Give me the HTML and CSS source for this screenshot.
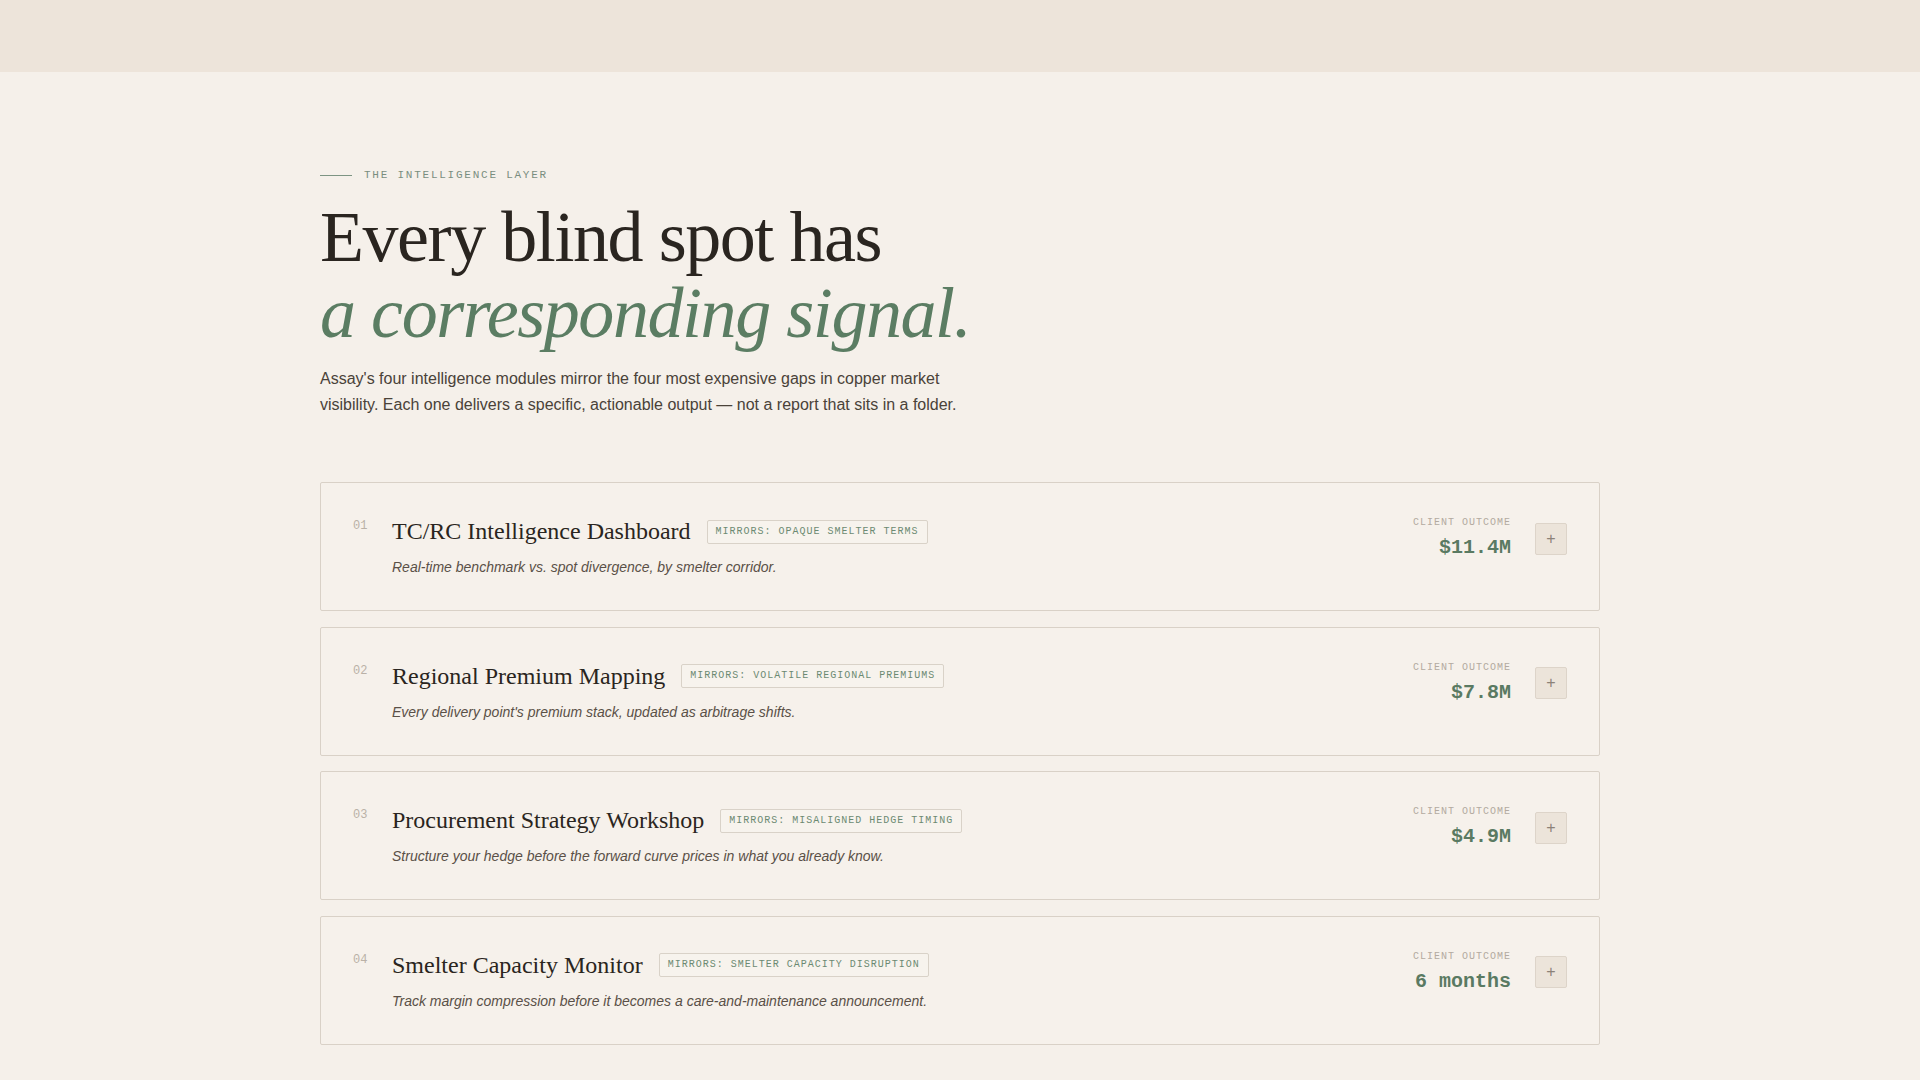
FILE: index.html
```html
<!DOCTYPE html>
<html lang="en">
<head>
    <meta charset="UTF-8">
    <meta name="viewport" content="width=device-width, initial-scale=1.0">
    <title>Assay — The Intelligence Layer</title>
    <link rel="stylesheet" href="styles.css">
</head>
<body>
    <header class="top-bar"></header>

    <section class="intel">
        <div class="eyebrow">
            <span class="eyebrow-line"></span>
            <span class="eyebrow-text">The Intelligence Layer</span>
        </div>
        <h1 class="intel-title">
            Every blind spot has<br>
            <em>a corresponding signal.</em>
        </h1>
        <p class="intel-lead">
            Assay's four intelligence modules mirror the four most expensive gaps in copper market
            visibility. Each one delivers a specific, actionable output — not a report that sits in a folder.
        </p>

        <div class="module-list">
            <div class="module">
                <div class="module-num">01</div>
                <div class="module-main">
                    <div class="module-head">
                        <h3 class="module-name">TC/RC Intelligence Dashboard</h3>
                        <span class="module-tag">Mirrors: Opaque smelter terms</span>
                    </div>
                    <p class="module-desc">Real-time benchmark vs. spot divergence, by smelter corridor.</p>
                </div>
                <div class="module-side">
                    <div class="outcome">
                        <div class="outcome-label">Client outcome</div>
                        <div class="outcome-value">$11.4M</div>
                    </div>
                    <button class="expand-btn">+</button>
                </div>
            </div>

            <div class="module">
                <div class="module-num">02</div>
                <div class="module-main">
                    <div class="module-head">
                        <h3 class="module-name">Regional Premium Mapping</h3>
                        <span class="module-tag">Mirrors: Volatile regional premiums</span>
                    </div>
                    <p class="module-desc">Every delivery point's premium stack, updated as arbitrage shifts.</p>
                </div>
                <div class="module-side">
                    <div class="outcome">
                        <div class="outcome-label">Client outcome</div>
                        <div class="outcome-value">$7.8M</div>
                    </div>
                    <button class="expand-btn">+</button>
                </div>
            </div>

            <div class="module">
                <div class="module-num">03</div>
                <div class="module-main">
                    <div class="module-head">
                        <h3 class="module-name">Procurement Strategy Workshop</h3>
                        <span class="module-tag">Mirrors: Misaligned hedge timing</span>
                    </div>
                    <p class="module-desc">Structure your hedge before the forward curve prices in what you already know.</p>
                </div>
                <div class="module-side">
                    <div class="outcome">
                        <div class="outcome-label">Client outcome</div>
                        <div class="outcome-value">$4.9M</div>
                    </div>
                    <button class="expand-btn">+</button>
                </div>
            </div>

            <div class="module">
                <div class="module-num">04</div>
                <div class="module-main">
                    <div class="module-head">
                        <h3 class="module-name">Smelter Capacity Monitor</h3>
                        <span class="module-tag">Mirrors: Smelter capacity disruption</span>
                    </div>
                    <p class="module-desc">Track margin compression before it becomes a care-and-maintenance announcement.</p>
                </div>
                <div class="module-side">
                    <div class="outcome">
                        <div class="outcome-label">Client outcome</div>
                        <div class="outcome-value">6 months</div>
                    </div>
                    <button class="expand-btn">+</button>
                </div>
            </div>
        </div>
    </section>
</body>
</html>
```

FILE: styles.css
```css
body {
    margin: 0;
    padding: 0;
    background-color: #f5f0ea;
    font-family: "Liberation Sans", Arial, sans-serif;
    color: #2a2520;
}
.top-bar {
    height: 72px;
    background-color: #ede4da;
}
.intel {
    width: 1280px;
    margin: 0 auto;
    padding: 95px 0 40px;
}
.eyebrow {
    display: flex;
    align-items: center;
    gap: 12px;
    height: 16px;
}
.eyebrow-line {
    width: 32px;
    height: 1px;
    background-color: #7d9483;
}
.eyebrow-text {
    font-family: "Liberation Mono", monospace;
    font-size: 11px;
    letter-spacing: 0.16em;
    text-transform: uppercase;
    color: #7a8e7f;
}
.intel-title {
    margin: 17px 0 15px;
    font-family: "Liberation Serif", "Times New Roman", serif;
    font-weight: normal;
    font-size: 72px;
    line-height: 1.05;
    letter-spacing: -0.02em;
    color: #2a2520;
}
.intel-title em {
    color: #5b7d63;
}
.intel-lead {
    margin: 0;
    max-width: 660px;
    font-size: 16px;
    line-height: 26px;
    color: #4a4239;
}
.module-list {
    margin-top: 64px;
    display: flex;
    flex-direction: column;
    gap: 15.5px;
}
.module {
    display: flex;
    align-items: flex-start;
    padding: 33px 32px 32px;
    background-color: #f6f1eb;
    border: 1px solid #d9d1c7;
    border-radius: 2px;
}
.module-num {
    width: 39px;
    flex-shrink: 0;
    font-family: "Liberation Mono", monospace;
    font-size: 12px;
    line-height: 20px;
    color: #bab1a7;
}
.module-main {
    flex: 1;
}
.module-head {
    display: flex;
    align-items: center;
    gap: 16px;
}
.module-name {
    margin: 0;
    font-family: "Liberation Serif", "Times New Roman", serif;
    font-weight: normal;
    font-size: 24px;
    line-height: 31px;
    color: #2a2520;
}
.module-tag {
    padding: 4px 8px;
    border: 1px solid #d9d2c8;
    border-radius: 2px;
    background-color: #f7f3ed;
    font-family: "Liberation Mono", monospace;
    font-size: 10px;
    line-height: 14px;
    letter-spacing: 0.1em;
    text-transform: uppercase;
    color: #6c8a72;
}
.module-desc {
    margin: 9px 0 0;
    font-size: 14px;
    font-style: italic;
    line-height: 22px;
    color: #5a5047;
}
.module-side {
    display: flex;
    align-items: center;
    gap: 24px;
}
.outcome {
    text-align: right;
}
.outcome-label {
    font-family: "Liberation Mono", monospace;
    font-size: 10px;
    line-height: 14px;
    letter-spacing: 0.1em;
    text-transform: uppercase;
    color: #b3aaa0;
}
.outcome-value {
    margin-top: 5px;
    font-family: "Liberation Mono", monospace;
    font-size: 20px;
    font-weight: bold;
    line-height: 26px;
    color: #5a7a62;
}
.expand-btn {
    width: 32px;
    height: 32px;
    padding: 0;
    background-color: #ece4da;
    border: 1px solid #ddd4c9;
    border-radius: 2px;
    font-family: "Liberation Sans", Arial, sans-serif;
    font-size: 16px;
    line-height: 30px;
    color: #8c8278;
    cursor: pointer;
}
```
